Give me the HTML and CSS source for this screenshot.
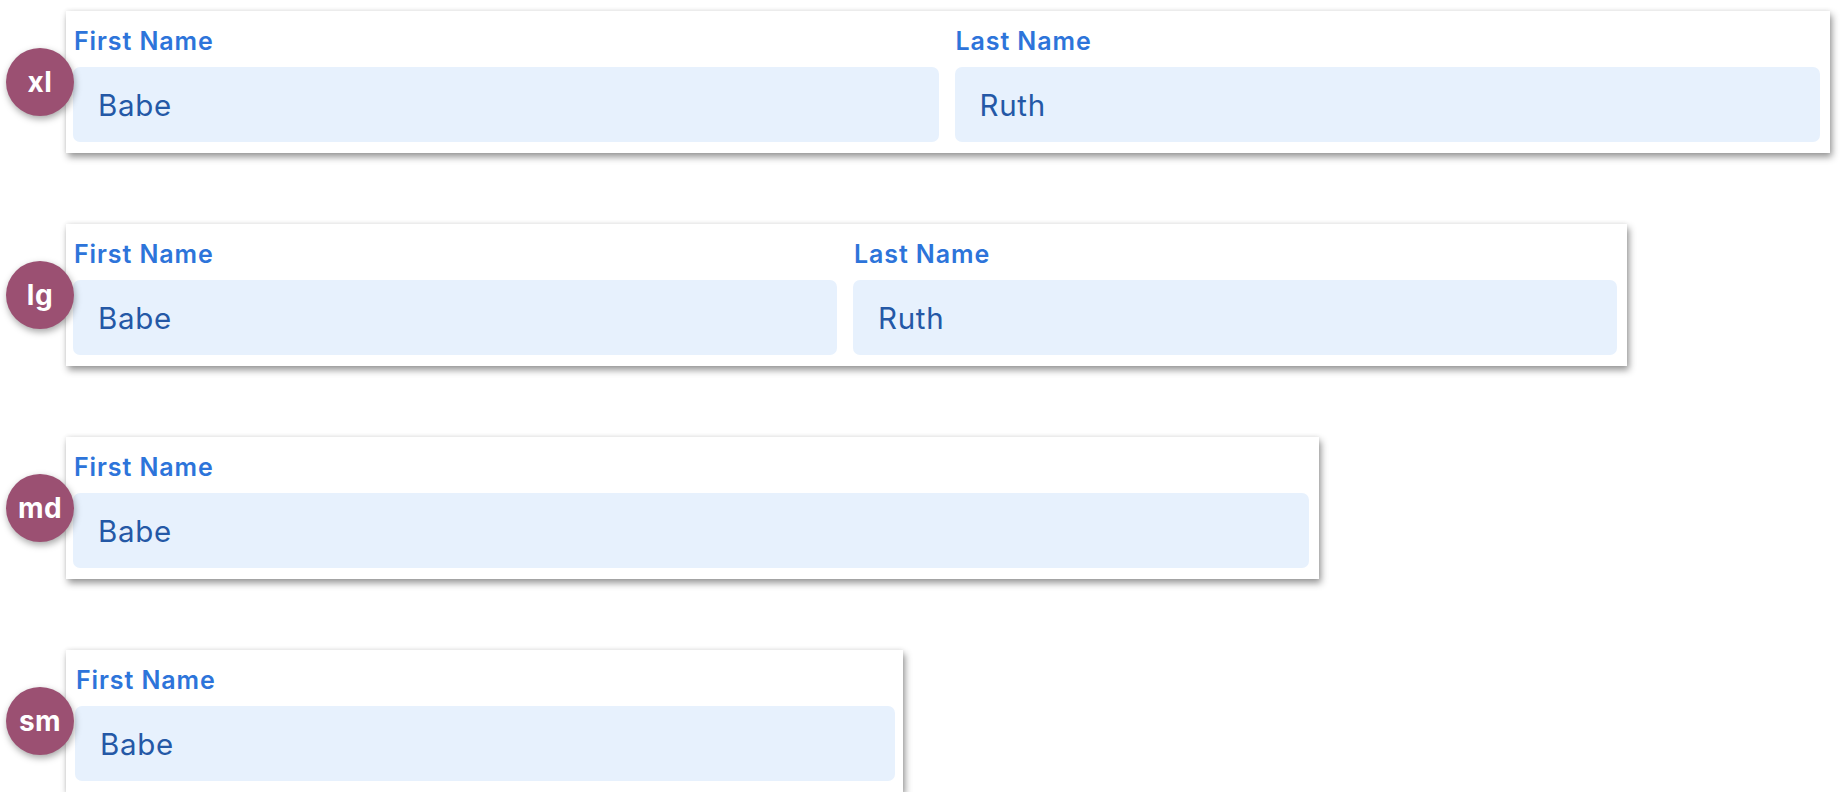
FILE: index.html
```html
<!DOCTYPE html>
<html>
<head>
<meta charset="utf-8">
<link rel="stylesheet" href="styles.css">
</head>
<body>
<div class="stack">
  <div class="row">
    <div class="badge">xl</div>
    <div class="card card-xl">
      <div class="fields two">
        <div class="field"><label class="label">First Name</label><div class="input">Babe</div></div>
        <div class="field"><label class="label">Last Name</label><div class="input">Ruth</div></div>
      </div>
    </div>
  </div>
  <div class="row">
    <div class="badge">lg</div>
    <div class="card card-lg">
      <div class="fields two">
        <div class="field"><label class="label">First Name</label><div class="input">Babe</div></div>
        <div class="field"><label class="label">Last Name</label><div class="input">Ruth</div></div>
      </div>
    </div>
  </div>
  <div class="row">
    <div class="badge">md</div>
    <div class="card card-md">
      <div class="fields">
        <div class="field"><label class="label">First Name</label><div class="input">Babe</div></div>
      </div>
    </div>
  </div>
  <div class="row">
    <div class="badge">sm</div>
    <div class="card card-sm">
      <div class="fields">
        <div class="field"><label class="label">First Name</label><div class="input">Babe</div></div>
      </div>
    </div>
  </div>
</div>
</body>
</html>
```

FILE: styles.css
```css
html, body {
  margin: 0;
  padding: 0;
  background: #ffffff;
}
body {
  font-family: "Inter", "Noto Sans", "Liberation Sans", sans-serif;
}
.stack {
  display: flex;
  flex-direction: column;
  gap: 71px;
  padding-top: 11px;
  padding-left: 6px;
}
.row {
  display: flex;
  align-items: center;
}
.badge {
  width: 68px;
  height: 68px;
  border-radius: 50%;
  background: #9b5072;
  color: #ffffff;
  font-weight: 700;
  font-size: 28px;
  letter-spacing: 0.5px;
  display: flex;
  align-items: center;
  justify-content: center;
  margin-right: -8px;
  position: relative;
  z-index: 1;
  box-shadow: 1px 3px 7px rgba(0, 0, 0, 0.35);
  flex: none;
}
.card {
  background: #ffffff;
  box-sizing: border-box;
  padding: 16px 10px 11px 7px;
  box-shadow: 2px 4px 7px rgba(0, 0, 0, 0.42), 0 -1px 4px rgba(0, 0, 0, 0.06);
  flex: none;
}
.card-xl { width: 1764px; }
.card-lg { width: 1561px; }
.card-md { width: 1253px; }
.card-sm { width: 837px; padding-left: 9px; padding-right: 8px; }
.fields {
  display: grid;
  grid-template-columns: 1fr;
}
.fields.two {
  grid-template-columns: 1fr 1fr;
  column-gap: 16px;
}
.field {
  display: flex;
  flex-direction: column;
  gap: 12px;
}
.label {
  display: block;
  color: #2d74da;
  font-size: 25px;
  font-weight: 600;
  letter-spacing: 0.9px;
  line-height: 28px;
  padding-left: 1px;
}
.input {
  height: 75px;
  background: #e7f1fd;
  border-radius: 7px;
  display: flex;
  align-items: center;
  padding-left: 25px;
  color: #2458a6;
  font-size: 29.5px;
  letter-spacing: 0.7px;
  font-weight: 400;
}
```
